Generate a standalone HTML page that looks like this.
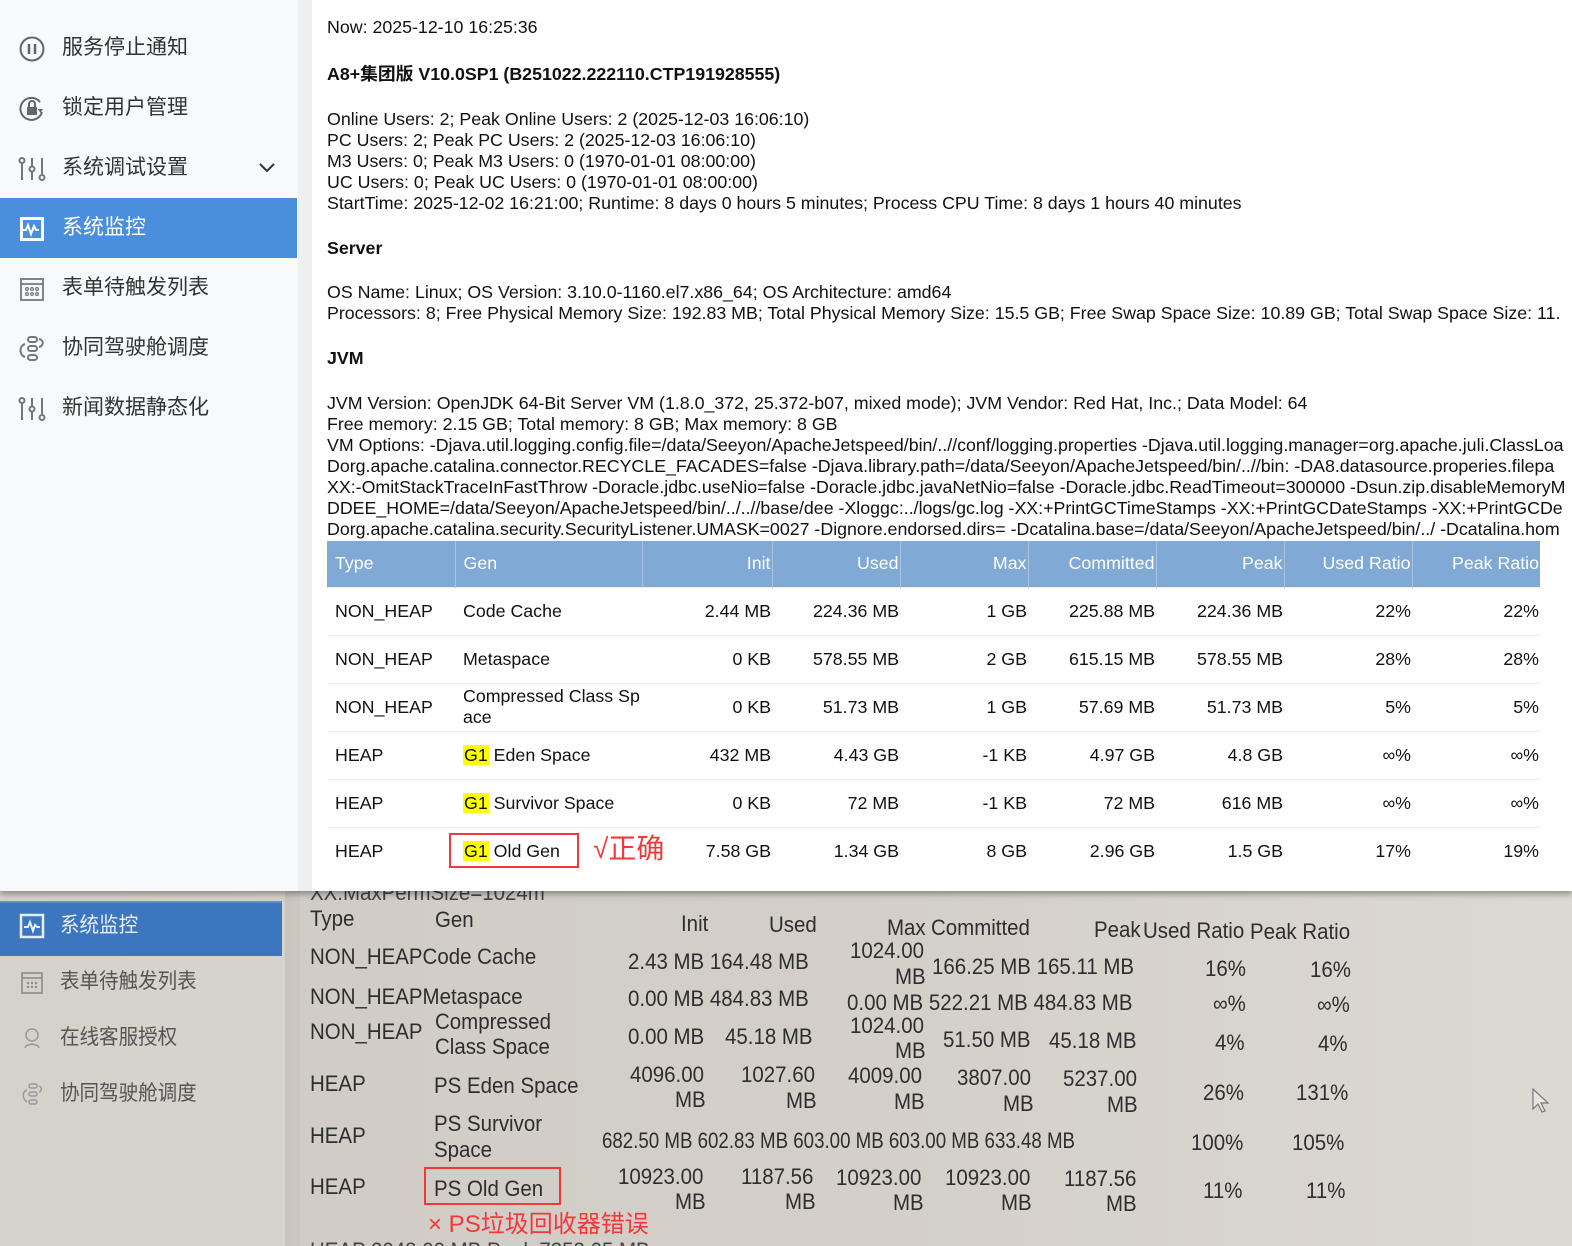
<!DOCTYPE html>
<html><head><meta charset="utf-8">
<style>
*{margin:0;padding:0;box-sizing:border-box}
html,body{width:1572px;height:1246px;overflow:hidden}
body{position:relative;background:#d3cec8;font-family:"Liberation Sans","Noto Sans CJK SC",sans-serif;color:#111}
#photo{position:absolute;left:0;top:880px;width:1572px;height:366px;overflow:hidden;background:linear-gradient(90deg,#d5d1cb 0,#d6d2cc 285px,#c9c4be 285px,#ccc7c1 300px,#d1ccc6 300px,#d4cfc9 900px,#dcd8d3 1572px)}
.p{position:absolute;font-size:22px;color:#2e2e2e;white-space:nowrap;transform:scaleX(.93);transform-origin:left top;line-height:1}
#top{position:absolute;left:0;top:0;width:1572px;height:891px;background:#fff;box-shadow:0 3px 6px rgba(0,0,0,.35)}
#side{position:absolute;left:0;top:0;width:298px;height:891px;background:#f7f9fb}
#strip{position:absolute;left:298px;top:0;width:14px;height:891px;background:#efefef}
.mi{position:absolute;left:0;width:297px;height:60px;font-size:21px;color:#333;line-height:60px;padding-left:62px}
.mi svg{position:absolute;left:18px;top:17px}
.act{background:#4a8fdd;color:#fff}
#main{position:absolute;left:327px;top:1px;font-size:17.8px;line-height:21px;white-space:nowrap}
table{position:absolute;left:327px;top:541px;border-collapse:collapse;font-size:17.8px;width:1213px}
th{background:#80a9d5;color:#fff;font-weight:normal;height:46px;padding:0 0;border-left:1px solid #a9c4e3}
th:first-child{border-left:none}
td{height:48px;border-top:1px solid #f0f0f0;padding:0}
.l{text-align:left;padding-left:8px}.r{text-align:right;padding-right:1px}
.g{background:#ff0;padding:0 1px}
</style></head><body>
<div id="photo">
 <div style="position:absolute;left:0;top:21px;width:282px;height:55px;background:#3b76be;border-top:2px solid #5a8fcf"></div>
 <svg style="position:absolute;left:19px;top:33px" width="26" height="26" viewBox="0 0 26 26"><rect x="2" y="2" width="22" height="22" fill="none" stroke="#e8eef7" stroke-width="2.5"/><path d="M5 14h4l2-5 3 9 2-6 2 2h3" fill="none" stroke="#e8eef7" stroke-width="2"/></svg>
 <div class="p" style="left:60px;top:35px;color:#e8eef7;font-size:21px">系统监控</div>
 <svg style="position:absolute;left:20px;top:91px" width="24" height="24" viewBox="0 0 24 24"><rect x="2" y="2" width="20" height="20" fill="none" stroke="#888" stroke-width="1.5"/><path d="M2 7h20" stroke="#888" stroke-width="1.5"/><g fill="#888"><circle cx="8" cy="12" r="1.2"/><circle cx="12" cy="12" r="1.2"/><circle cx="16" cy="12" r="1.2"/><circle cx="8" cy="16" r="1.2"/><circle cx="12" cy="16" r="1.2"/><circle cx="16" cy="16" r="1.2"/></g></svg>
 <div class="p" style="left:60px;top:91px;font-size:21px;color:#555">表单待触发列表</div>
 <svg style="position:absolute;left:20px;top:146px" width="24" height="24" viewBox="0 0 24 24"><circle cx="12" cy="9" r="6" fill="none" stroke="#999" stroke-width="1.5"/><path d="M5 22c1-5 13-5 14 0" fill="none" stroke="#999" stroke-width="1.5"/></svg>
 <div class="p" style="left:60px;top:147px;font-size:21px;color:#555">在线客服授权</div>
 <svg style="position:absolute;left:20px;top:202px" width="24" height="24" viewBox="0 0 24 24"><g fill="none" stroke="#999" stroke-width="1.5"><rect x="9" y="2" width="8" height="4" rx="2"/><rect x="9" y="10" width="8" height="4" rx="2"/><rect x="9" y="18" width="8" height="4" rx="2"/><path d="M7 8c-5 2-5 8 0 12M19 4c3 1 3 5 0 6"/></g></svg>
 <div class="p" style="left:60px;top:203px;font-size:21px;color:#555">协同驾驶舱调度</div>

 <div class="p" style="left:310px;top:2px;color:#444">XX:MaxPermSize=1024m</div>
 <div class="p" style="left:310px;top:28px">Type</div>
 <div class="p" style="left:435px;top:29px">Gen</div>
 <div class="p" style="left:681px;top:33px">Init</div>
 <div class="p" style="left:769px;top:34px">Used</div>
 <div class="p" style="left:887px;top:37px">Max</div>
 <div class="p" style="left:931px;top:37px">Committed</div>
 <div class="p" style="left:1094px;top:39px">Peak</div>
 <div class="p" style="left:1143px;top:40px">Used Ratio</div>
 <div class="p" style="left:1250px;top:41px">Peak Ratio</div>

 <div class="p" style="left:310px;top:66px">NON_HEAPCode Cache</div>
 <div class="p" style="left:628px;top:71px">2.43 MB 164.48 MB</div>
 <div class="p" style="left:850px;top:60px">1024.00</div>
 <div class="p" style="left:895px;top:86px">MB</div>
 <div class="p" style="left:932px;top:76px">166.25 MB 165.11 MB</div>
 <div class="p" style="left:1205px;top:78px">16%</div>
 <div class="p" style="left:1310px;top:79px">16%</div>

 <div class="p" style="left:310px;top:106px">NON_HEAPMetaspace</div>
 <div class="p" style="left:628px;top:108px">0.00 MB 484.83 MB</div>
 <div class="p" style="left:847px;top:112px">0.00 MB 522.21 MB 484.83 MB</div>
 <div class="p" style="left:1213px;top:113px">∞%</div>
 <div class="p" style="left:1317px;top:114px">∞%</div>

 <div class="p" style="left:310px;top:141px">NON_HEAP</div>
 <div class="p" style="left:435px;top:131px">Compressed</div>
 <div class="p" style="left:435px;top:156px">Class Space</div>
 <div class="p" style="left:628px;top:146px">0.00 MB</div>
 <div class="p" style="left:725px;top:146px">45.18 MB</div>
 <div class="p" style="left:850px;top:135px">1024.00</div>
 <div class="p" style="left:895px;top:160px">MB</div>
 <div class="p" style="left:943px;top:149px">51.50 MB</div>
 <div class="p" style="left:1049px;top:150px">45.18 MB</div>
 <div class="p" style="left:1215px;top:152px">4%</div>
 <div class="p" style="left:1318px;top:153px">4%</div>

 <div class="p" style="left:310px;top:193px">HEAP</div>
 <div class="p" style="left:434px;top:195px">PS Eden Space</div>
 <div class="p" style="left:630px;top:184px">4096.00</div><div class="p" style="left:675px;top:209px">MB</div>
 <div class="p" style="left:741px;top:184px">1027.60</div><div class="p" style="left:786px;top:210px">MB</div>
 <div class="p" style="left:848px;top:185px">4009.00</div><div class="p" style="left:894px;top:211px">MB</div>
 <div class="p" style="left:957px;top:187px">3807.00</div><div class="p" style="left:1003px;top:213px">MB</div>
 <div class="p" style="left:1063px;top:188px">5237.00</div><div class="p" style="left:1107px;top:214px">MB</div>
 <div class="p" style="left:1203px;top:202px">26%</div>
 <div class="p" style="left:1296px;top:202px">131%</div>

 <div class="p" style="left:310px;top:245px">HEAP</div>
 <div class="p" style="left:434px;top:233px">PS Survivor</div>
 <div class="p" style="left:434px;top:259px">Space</div>
 <div class="p" style="left:602px;top:250px;transform:scaleX(.85)">682.50 MB 602.83 MB 603.00 MB 603.00 MB 633.48 MB</div>
 <div class="p" style="left:1191px;top:252px">100%</div>
 <div class="p" style="left:1292px;top:252px">105%</div>

 <div class="p" style="left:310px;top:296px">HEAP</div>
 <div style="position:absolute;left:424px;top:287px;width:137px;height:38px;border:2.5px solid #f03a3a"></div>
 <div class="p" style="left:434px;top:298px">PS Old Gen</div>
 <div class="p" style="left:618px;top:286px">10923.00</div><div class="p" style="left:675px;top:311px">MB</div>
 <div class="p" style="left:741px;top:286px">1187.56</div><div class="p" style="left:785px;top:311px">MB</div>
 <div class="p" style="left:836px;top:287px">10923.00</div><div class="p" style="left:893px;top:312px">MB</div>
 <div class="p" style="left:945px;top:287px">10923.00</div><div class="p" style="left:1001px;top:312px">MB</div>
 <div class="p" style="left:1064px;top:288px">1187.56</div><div class="p" style="left:1106px;top:313px">MB</div>
 <div class="p" style="left:1203px;top:300px">11%</div>
 <div class="p" style="left:1306px;top:300px">11%</div>
 <div style="position:absolute;left:428px;top:324px;font-size:24px;color:#f03a3a;white-space:nowrap">× PS垃圾回收器错误</div>
 <div class="p" style="left:310px;top:360px;color:#444">HEAP 2048.00 MB Peak 7353.05 MB</div>
 <svg style="position:absolute;left:1530px;top:207px" width="20" height="28" viewBox="0 0 20 28"><path d="M3 2v20l5-5 4 8 3-1-4-8h7z" fill="#e8e6e2" stroke="#777" stroke-width="1.2"/></svg>
</div>

<div id="top">
 <div id="side">
  <div class="mi" style="top:18px"><svg width="28" height="28" viewBox="0 0 28 28"><circle cx="14" cy="14" r="11.5" fill="none" stroke="#666" stroke-width="2"/><path d="M11 9v10M17 9v10" stroke="#666" stroke-width="2.5"/></svg>服务停止通知</div>
  <div class="mi" style="top:78px"><svg width="28" height="28" viewBox="0 0 28 28"><path d="M24 17A11 11 0 1 1 22 7" fill="none" stroke="#666" stroke-width="2"/><path d="M20 14l5 0-2.5 4z" fill="#666"/><rect x="9" y="12" width="10" height="8" fill="#666"/><path d="M11 12v-3a3 3 0 0 1 6 0v3" fill="none" stroke="#666" stroke-width="2"/></svg>锁定用户管理</div>
  <div class="mi" style="top:138px"><svg width="28" height="28" viewBox="0 0 28 28"><g fill="none" stroke="#777" stroke-width="2"><path d="M4 9v16M14 3v8M14 17v8M24 3v16"/><circle cx="4" cy="5.5" r="2.5"/><circle cx="14" cy="14" r="2.5"/><circle cx="24" cy="22.5" r="2.5"/></g></svg>系统调试设置<svg style="left:258px;top:24px" width="18" height="12" viewBox="0 0 18 12"><path d="M2 2l7 7 7-7" fill="none" stroke="#333" stroke-width="2"/></svg></div>
  <div class="mi act" style="top:198px"><svg width="28" height="28" viewBox="0 0 28 28"><rect x="2" y="2" width="24" height="24" fill="#fff"/><rect x="5" y="5" width="18" height="18" fill="#4a8fdd"/><path d="M5 15h3l2-5 3 9 3-8 2 4h3" fill="none" stroke="#fff" stroke-width="2"/></svg>系统监控</div>
  <div class="mi" style="top:258px"><svg width="28" height="28" viewBox="0 0 28 28"><rect x="3" y="4" width="22" height="21" fill="none" stroke="#777" stroke-width="1.8"/><path d="M3 9h22" stroke="#777" stroke-width="1.8"/><g fill="none" stroke="#777" stroke-width="1.2"><circle cx="9" cy="14" r="1.4"/><circle cx="14" cy="14" r="1.4"/><circle cx="19" cy="14" r="1.4"/><circle cx="9" cy="19" r="1.4"/><circle cx="14" cy="19" r="1.4"/><circle cx="19" cy="19" r="1.4"/></g></svg>表单待触发列表</div>
  <div class="mi" style="top:318px"><svg width="28" height="28" viewBox="0 0 28 28"><g fill="none" stroke="#777" stroke-width="2"><rect x="10" y="2" width="9" height="5" rx="2.5"/><rect x="10" y="11" width="9" height="5" rx="2.5"/><rect x="10" y="20" width="9" height="5" rx="2.5"/><path d="M7 9C1 11 1 20 7 22M21 4c5 1 5 7 0 8"/></g></svg>协同驾驶舱调度</div>
  <div class="mi" style="top:378px"><svg width="28" height="28" viewBox="0 0 28 28"><g fill="none" stroke="#777" stroke-width="2"><path d="M4 9v16M14 3v8M14 17v8M24 3v16"/><circle cx="4" cy="5.5" r="2.5"/><circle cx="14" cy="14" r="2.5"/><circle cx="24" cy="22.5" r="2.5"/></g></svg>新闻数据静态化</div>
 </div>
 <div id="strip"></div>
 <div id="main">
  <div style="position:absolute;top:16px">Now: 2025-12-10 16:25:36</div>
  <div style="position:absolute;top:63px;font-weight:bold">A8+集团版 V10.0SP1 (B251022.222110.CTP191928555)</div>
  <div style="position:absolute;top:108px">Online Users: 2; Peak Online Users: 2 (2025-12-03 16:06:10)<br>PC Users: 2; Peak PC Users: 2 (2025-12-03 16:06:10)<br>M3 Users: 0; Peak M3 Users: 0 (1970-01-01 08:00:00)<br>UC Users: 0; Peak UC Users: 0 (1970-01-01 08:00:00)<br>StartTime: 2025-12-02 16:21:00; Runtime: 8 days 0 hours 5 minutes; Process CPU Time: 8 days 1 hours 40 minutes</div>
  <div style="position:absolute;top:237px;font-weight:bold">Server</div>
  <div style="position:absolute;top:281px">OS Name: Linux; OS Version: 3.10.0-1160.el7.x86_64; OS Architecture: amd64<br>Processors: 8; Free Physical Memory Size: 192.83 MB; Total Physical Memory Size: 15.5 GB; Free Swap Space Size: 10.89 GB; Total Swap Space Size: 11.</div>
  <div style="position:absolute;top:347px;font-weight:bold">JVM</div>
  <div style="position:absolute;top:392px">JVM Version: OpenJDK 64-Bit Server VM (1.8.0_372, 25.372-b07, mixed mode); JVM Vendor: Red Hat, Inc.; Data Model: 64<br>Free memory: 2.15 GB; Total memory: 8 GB; Max memory: 8 GB<br>VM Options: -Djava.util.logging.config.file=/data/Seeyon/ApacheJetspeed/bin/..//conf/logging.properties -Djava.util.logging.manager=org.apache.juli.ClassLoa<br>Dorg.apache.catalina.connector.RECYCLE_FACADES=false -Djava.library.path=/data/Seeyon/ApacheJetspeed/bin/..//bin: -DA8.datasource.properies.filepa<br>XX:-OmitStackTraceInFastThrow -Doracle.jdbc.useNio=false -Doracle.jdbc.javaNetNio=false -Doracle.jdbc.ReadTimeout=300000 -Dsun.zip.disableMemoryM<br>DDEE_HOME=/data/Seeyon/ApacheJetspeed/bin/../..//base/dee -Xloggc:../logs/gc.log -XX:+PrintGCTimeStamps -XX:+PrintGCDateStamps -XX:+PrintGCDe<br>Dorg.apache.catalina.security.SecurityListener.UMASK=0027 -Dignore.endorsed.dirs= -Dcatalina.base=/data/Seeyon/ApacheJetspeed/bin/../ -Dcatalina.hom</div>
 </div>
 <table>
  <colgroup><col style="width:128px"><col style="width:187px"><col style="width:130px"><col style="width:128px"><col style="width:128px"><col style="width:128px"><col style="width:128px"><col style="width:128px"><col style="width:128px"></colgroup>
  <tr><th class="l">Type</th><th class="l">Gen</th><th class="r">Init</th><th class="r">Used</th><th class="r">Max</th><th class="r">Committed</th><th class="r">Peak</th><th class="r">Used Ratio</th><th class="r">Peak Ratio</th></tr>
  <tr><td class="l">NON_HEAP</td><td class="l">Code Cache</td><td class="r">2.44 MB</td><td class="r">224.36 MB</td><td class="r">1 GB</td><td class="r">225.88 MB</td><td class="r">224.36 MB</td><td class="r">22%</td><td class="r">22%</td></tr>
  <tr><td class="l">NON_HEAP</td><td class="l">Metaspace</td><td class="r">0 KB</td><td class="r">578.55 MB</td><td class="r">2 GB</td><td class="r">615.15 MB</td><td class="r">578.55 MB</td><td class="r">28%</td><td class="r">28%</td></tr>
  <tr><td class="l">NON_HEAP</td><td class="l" style="line-height:21px">Compressed Class Sp<br>ace</td><td class="r">0 KB</td><td class="r">51.73 MB</td><td class="r">1 GB</td><td class="r">57.69 MB</td><td class="r">51.73 MB</td><td class="r">5%</td><td class="r">5%</td></tr>
  <tr><td class="l">HEAP</td><td class="l"><span class="g">G1</span> Eden Space</td><td class="r">432 MB</td><td class="r">4.43 GB</td><td class="r">-1 KB</td><td class="r">4.97 GB</td><td class="r">4.8 GB</td><td class="r">∞%</td><td class="r">∞%</td></tr>
  <tr><td class="l">HEAP</td><td class="l"><span class="g">G1</span> Survivor Space</td><td class="r">0 KB</td><td class="r">72 MB</td><td class="r">-1 KB</td><td class="r">72 MB</td><td class="r">616 MB</td><td class="r">∞%</td><td class="r">∞%</td></tr>
  <tr><td class="l">HEAP</td><td class="l" style="position:relative"><span class="g">G1</span> Old Gen<div style="position:absolute;left:-6px;top:5px;width:130px;height:35px;border:2.5px solid #f03a3a"></div><div style="position:absolute;left:138px;top:4px;font-size:28px;color:#f03a3a;white-space:nowrap;line-height:34px">√正确</div></td><td class="r">7.58 GB</td><td class="r">1.34 GB</td><td class="r">8 GB</td><td class="r">2.96 GB</td><td class="r">1.5 GB</td><td class="r">17%</td><td class="r">19%</td></tr>
 </table>
</div>
</body></html>
